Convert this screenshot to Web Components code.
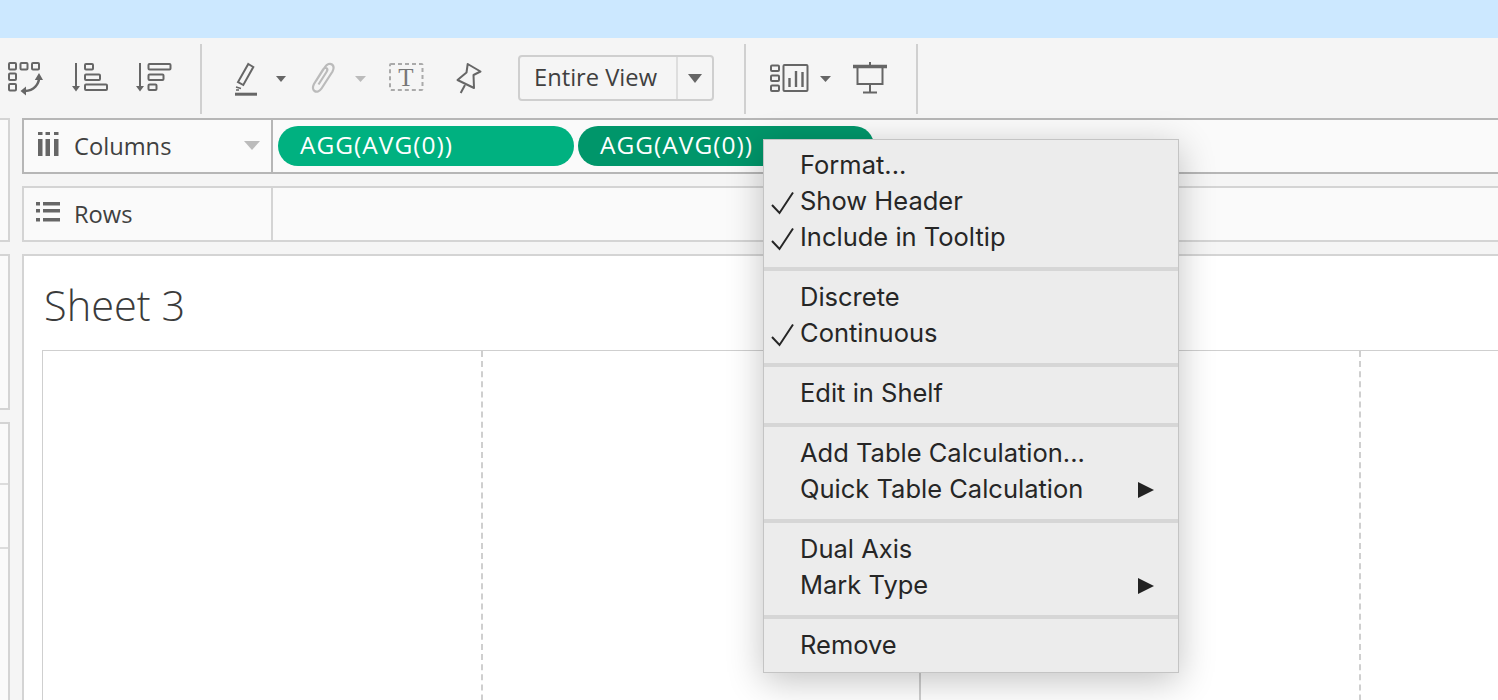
<!DOCTYPE html>
<html>
<head>
<meta charset="utf-8">
<title>Sheet 3</title>
<style>
  html, body { margin: 0; height: 100%; overflow: hidden; background: #f5f5f5; }
  body { font-family: "Open Sans", "Liberation Sans", sans-serif; }
</style>
</head>
<body>
<template id="shell-tpl">
  <style>
    :host { display: flex; flex-direction: column; height: 700px; width: 1498px; position: relative; overflow: hidden; background: #f5f5f5; }
    .top { height: 38px; background: #cce8ff; flex: none; }
    .work { display: flex; flex: 1; min-height: 0; }
    .left { width: 10px; flex: none; display: flex; flex-direction: column; gap: 12px; }
    .main { flex: 1; margin-left: 12px; margin-right: -4px; display: flex; flex-direction: column; gap: 12px; min-width: 0; }
  </style>
  <div class="top"></div>
  <slot name="toolbar"></slot>
  <div class="work">
    <div class="left"><slot name="left"></slot></div>
    <div class="main"><slot></slot></div>
  </div>
  <slot name="overlay"></slot>
</template>

<template id="toolbar-tpl">
  <style>
    :host { display: flex; align-items: center; height: 80px; flex: none; color: #666; }
    svg { display: block; flex: none; height: 40px; }
    .sep { width: 2px; height: 70px; margin-top: 2px; background: #d0d0d0; flex: none; }
    .drop { flex: none; box-sizing: border-box; width: 196px; height: 46px; margin-left: 34px; border: 2px solid #cfcfcf; border-radius: 4px; display: flex; font-size: 23.7px; color: #404040; }
    .drop span { width: 158px; box-sizing: border-box; padding-left: 14px; line-height: 40px; border-right: 2px solid #dedede; flex: none; }
    .drop i { flex: 1; display: flex; align-items: center; justify-content: center; }
    .drop b { width: 0; height: 0; border: 7px solid transparent; border-top: 9px solid #666; border-bottom: 0; }
  </style>
  <svg style="margin-left:6px" width="40" viewBox="6 58 40 40" fill="none" stroke="#666" stroke-width="2">
    <rect x="9" y="63" width="7" height="6.5" rx="1"/><rect x="20.5" y="63" width="7" height="6.5" rx="1"/><rect x="32" y="63" width="7" height="6.5" rx="1"/>
    <rect x="9" y="73.5" width="7" height="6.5" rx="1"/><rect x="9" y="84" width="7" height="6.5" rx="1"/>
    <path d="M39 78c0 6-5 12.500-14 13" stroke-width="2.400"/><path d="M34.800 80l4.200-7 4 7zM26 86.500l-5.500 4.500 5.500 4.500z" fill="#666" stroke="none"/>
  </svg>
  <svg style="margin-left:20px" width="46" viewBox="66 58 46 40" fill="none" stroke="#666" stroke-width="2">
    <path d="M76 63v24"/><path d="M72 86h8l-4 5.500z" fill="#666" stroke="none"/>
    <rect x="85" y="64" width="8" height="5.500" rx="1"/><rect x="85" y="74.500" width="15" height="5.500" rx="1"/><rect x="85" y="84.500" width="22" height="5.500" rx="1"/>
  </svg>
  <svg style="margin-left:18px" width="46" viewBox="130 58 46 40" fill="none" stroke="#666" stroke-width="2">
    <path d="M140 63v24"/><path d="M136 86h8l-4 5.500z" fill="#666" stroke="none"/>
    <rect x="148.500" y="64" width="22" height="5.500" rx="1"/><rect x="148.500" y="74.500" width="15" height="5.500" rx="1"/><rect x="148.500" y="84.500" width="8" height="5.500" rx="1"/>
  </svg>
  <div class="sep" style="margin-left:24px"></div>
  <svg style="margin-left:28px" width="30" viewBox="230 58 30 40" fill="none" stroke="#666" stroke-width="2">
    <path d="M248.300 64l5 3-10 18-5.300-3z"/><path d="M236 87l5 1.500M236 90h3" stroke-width="1.500"/><path d="M235 94.200h22" stroke-width="3"/>
  </svg>
  <svg style="margin-left:14px" width="14" viewBox="274 58 14 40"><path d="M276 76h10l-5 6z" fill="#666"/></svg>
  <svg style="margin-left:20px" width="30" viewBox="308 58 30 40" fill="none" stroke="#bbb" stroke-width="2.200">
    <path d="M316 81l9-14c2-3 5-4 7-2.500s2 4 .5 7l-11 17c-2 3-5 4-7 2.500s-2-4-.5-7l9-14.500c1-1.500 2.500-2 3.500-1.300s1 2.300 0 3.800l-8 12.500"/>
  </svg>
  <svg style="margin-left:15px" width="15" viewBox="353 58 15 40"><path d="M355 76h11l-5.500 6z" fill="#bbb"/></svg>
  <svg style="margin-left:19px" width="38" viewBox="387 58 38 40">
    <rect x="390" y="64" width="32.500" height="26" rx="1" fill="none" stroke="#aaa" stroke-width="2" stroke-dasharray="4 3"/>
    <text x="406" y="85.500" text-anchor="middle" font-family="Liberation Serif, serif" font-size="25" fill="#777">T</text>
  </svg>
  <svg style="margin-left:29px" width="30" viewBox="454 58 30 40" fill="none" stroke="#666" stroke-width="2" stroke-linejoin="round">
    <path d="M467.700 64l12.800 7.500-7 3.500.5 13-16.500-8 9-7.500z"/><path d="M465 85l-4.300 8"/>
  </svg>
  <div class="drop"><span>Entire View</span><i><b></b></i></div>
  <div class="sep" style="margin-left:30px"></div>
  <svg style="margin-left:22px" width="42" viewBox="768 58 42 40" fill="none" stroke="#666" stroke-width="2">
    <rect x="771" y="65.500" width="8" height="5.500" rx="1"/><rect x="771" y="75.500" width="8" height="5.500" rx="1"/><rect x="771" y="85.500" width="8" height="5.500" rx="1"/>
    <rect x="783.500" y="65" width="24" height="26" rx="1"/>
    <path d="M789.500 78v9M796 71v16M802.500 72v15" stroke-width="2.400"/>
  </svg>
  <svg style="margin-left:8px" width="15" viewBox="818 58 15 40"><path d="M820 76h11l-5.500 6z" fill="#666"/></svg>
  <svg style="margin-left:18px" width="38" viewBox="851 58 38 40" fill="none" stroke="#666" stroke-width="2">
    <path d="M853 66.500h34" stroke-width="3.500"/><path d="M870 62v4M857.500 67v17h25V67M870 84v8M863 92.500h14"/>
  </svg>
  <div class="sep" style="margin-left:27px"></div>
</template>

<template id="panel-tpl">
  <style>
    :host { display: flex; flex-direction: column; flex: none; box-sizing: border-box; margin-left: -4px; background: #fafafa; border: 2px solid #d4d4d4; }
    ::slotted(hr) { border: 0; height: 2px; background: #dcdcdc; margin: 0; }
  </style>
  <slot></slot>
</template>

<template id="shelf-tpl">
  <style>
    :host { display: flex; flex: none; height: 56px; box-sizing: border-box; background: #fafafa; border: 2px solid var(--line, #d4d4d4); border-right: 0; }
    .head { width: 249px; box-sizing: border-box; flex: none; display: flex; align-items: center; position: relative; padding-left: 50px; border-right: 2px solid var(--line, #d4d4d4); font-size: 23.7px; color: #404040; }
    .ic { position: absolute; left: 12px; top: 0; }
    .ar { position: absolute; right: 11px; top: 21px; width: 0; height: 0; border: 8px solid transparent; border-top: 9px solid #bbb; border-bottom: 0; display: none; }
    :host([menu]) .ar { display: block; }
    .pills { display: flex; align-items: center; gap: 4px; padding-left: 5px; }
    svg { display: block; }
  </style>
  <div class="head"><span class="ic"><slot name="icon"></slot></span><span id="t"></span><span class="ar"></span></div>
  <div class="pills"><slot></slot></div>
</template>

<template id="pill-tpl">
  <style>
    :host { display: block; width: 296px; height: 40px; box-sizing: border-box; border-radius: 20px; background: var(--fill, #00b180); color: #fff; font-size: 24.5px; letter-spacing: 1px; line-height: 38px; padding-left: 22px; white-space: nowrap; }
  </style>
  <slot></slot>
</template>

<template id="sheet-tpl">
  <style>
    :host { display: block; flex: 1; background: #fff; border: 2px solid #d4d4d4; border-right: 0; border-bottom: 0; min-height: 0; }
    h1 { margin: 0; height: 94px; box-sizing: border-box; padding: 24px 0 0 20px; font-size: 41.5px; font-weight: 300; color: #3b3b3b; line-height: 50px; font-family: "Open Sans", sans-serif; }
    .chart { margin-left: 18px; padding-left: 1px; height: 400px; border: solid #cfcfcf; border-width: 1px 0 0 1px; display: grid; grid-template-columns: 439px 438px 440px 439px; }
    .chart div { border-right: 2px dashed #cfcfcf; }
    .chart div.axis { border-right: 2px solid #cfcfcf; }
  </style>
  <h1><slot></slot></h1>
  <div class="chart"><div></div><div class="axis"></div><div></div><div></div></div>
</template>

<template id="menu-tpl">
  <style>
    :host { display: block; position: absolute; left: 763px; top: 139px; width: 416px; height: 534px; box-sizing: border-box; background: #ececec; border: 1px solid #c4c4c4; box-shadow: 0 8px 34px rgba(0,0,0,.24); color: #262626; font-family: Inter, "Noto Sans", sans-serif; font-size: 25.5px; }
    ::slotted(menu-group) { border-top: 4px solid #d6d6d6; }
    ::slotted(menu-group:first-child) { border-top: 0; padding-top: 8px !important; }
  </style>
  <slot></slot>
</template>

<template id="group-tpl">
  <style>
    :host { display: block; padding: 9px 0 11px; }
  </style>
  <slot></slot>
</template>

<template id="item-tpl">
  <style>
    :host { display: flex; align-items: center; height: 36px; box-sizing: border-box; padding: 0 0 4px 36px; position: relative; white-space: nowrap; }
    svg { position: absolute; left: 7px; top: 6px; display: none; }
    :host([checked]) svg { display: block; }
    .sub { position: absolute; right: 24px; top: 10px; width: 0; height: 0; border-left: 16px solid #222; border-top: 8px solid transparent; border-bottom: 8px solid transparent; display: none; }
    :host([submenu]) .sub { display: block; }
  </style>
  <svg width="24" height="26" viewBox="0 0 24 26" fill="none" stroke="#262626" stroke-width="2"><path d="M1 15l7.500 8L22 2.500"/></svg>
  <slot></slot>
  <span class="sub"></span>
</template>

<app-shell>
  <tool-bar slot="toolbar"></tool-bar>

  <side-panel slot="left" style="height:124px"></side-panel>
  <side-panel slot="left" style="height:156px"></side-panel>
  <side-panel slot="left" style="height:300px">
    <div style="height:59px"></div><hr>
    <div style="height:62px"></div><hr>
  </side-panel>

  <view-shelf label="Columns" menu style="--line:#b6b6b6">
    <svg slot="icon" width="24" height="52" viewBox="0 0 24 52" fill="#666"><path d="M2 12h4.500v3H2zM2 19h4.500v17H2zM9.500 12H14v3H9.500zM9.500 19H14v17H9.500zM18 12h4.500v3H18zM18 19h4.500v17H18z"/></svg>
    <data-pill>AGG(AVG(0))</data-pill>
    <data-pill style="--fill:#00966a">AGG(AVG(0))</data-pill>
  </view-shelf>
  <view-shelf label="Rows">
    <svg slot="icon" width="26" height="52" viewBox="0 0 26 52" fill="#666"><path d="M0 14h4v3.500H0zM7 14h17v3.500H7zM0 21h4v3.500H0zM7 21h17v3.500H7zM0 30h4v3.500H0zM7 30h17v3.500H7z"/></svg>
  </view-shelf>
  <sheet-view>Sheet 3</sheet-view>

  <context-menu slot="overlay">
    <menu-group>
      <menu-item>Format...</menu-item>
      <menu-item checked>Show Header</menu-item>
      <menu-item checked>Include in Tooltip</menu-item>
    </menu-group>
    <menu-group>
      <menu-item>Discrete</menu-item>
      <menu-item checked>Continuous</menu-item>
    </menu-group>
    <menu-group>
      <menu-item>Edit in Shelf</menu-item>
    </menu-group>
    <menu-group>
      <menu-item>Add Table Calculation...</menu-item>
      <menu-item submenu>Quick Table Calculation</menu-item>
    </menu-group>
    <menu-group>
      <menu-item>Dual Axis</menu-item>
      <menu-item submenu>Mark Type</menu-item>
    </menu-group>
    <menu-group>
      <menu-item>Remove</menu-item>
    </menu-group>
  </context-menu>
</app-shell>

<script>
  const simple = (tag, tplId) => {
    customElements.define(tag, class extends HTMLElement {
      constructor() {
        super();
        this.attachShadow({ mode: "open" });
        this.shadowRoot.appendChild(document.getElementById(tplId).content.cloneNode(true));
      }
    });
  };

  simple("app-shell", "shell-tpl");
  simple("tool-bar", "toolbar-tpl");
  simple("side-panel", "panel-tpl");
  simple("data-pill", "pill-tpl");
  simple("sheet-view", "sheet-tpl");
  simple("context-menu", "menu-tpl");
  simple("menu-group", "group-tpl");
  simple("menu-item", "item-tpl");

  class ViewShelf extends HTMLElement {
    constructor() {
      super();
      this.attachShadow({ mode: "open" });
      this.shadowRoot.appendChild(document.getElementById("shelf-tpl").content.cloneNode(true));
    }

    connectedCallback() {
      this.shadowRoot.getElementById("t").textContent = this.getAttribute("label");
    }
  }
  customElements.define("view-shelf", ViewShelf);
</script>
</body>
</html>
